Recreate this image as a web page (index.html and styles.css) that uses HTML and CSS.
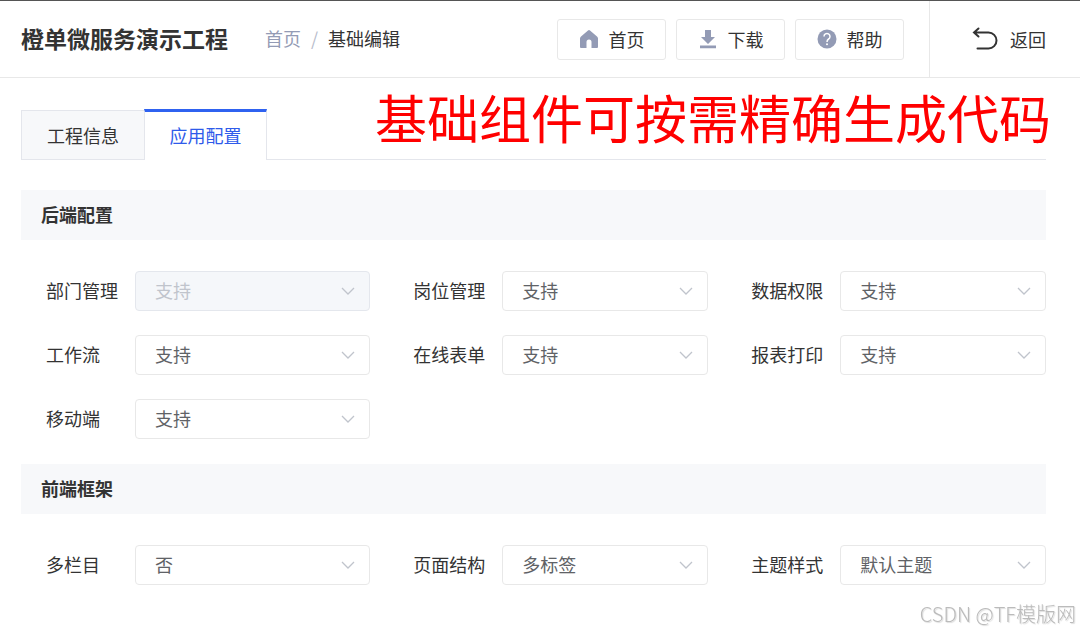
FILE: index.html
```
<!DOCTYPE html>
<html lang="zh-CN">
<head>
  <meta charset="UTF-8">
  <meta name="viewport" content="width=device-width, initial-scale=1.0">
  <title>橙单微服务演示工程</title>
  <link rel="stylesheet" href="styles.css">
</head>
<body>
  <header class="header">
    <h1 class="title">橙单微服务演示工程</h1>
    <nav class="breadcrumb">
      <a href="#">首页</a>
      <span class="separator">/</span>
      <span>基础编辑</span>
    </nav>
    <div class="header-buttons">
      <button type="button" class="btn">
        <svg width="20" height="20" viewBox="0 0 20 20"><path d="M9 1.400Q10 .6 11 1.400L18 7.400Q19 8.300 19 9.500V18Q19 19 18 19H12.500V13a2.500 2.500 0 0 0-5 0v6H2Q1 19 1 18V9.500Q1 8.300 2 7.400Z" fill="#939bb5"/></svg>
        首页
      </button>
      <button type="button" class="btn">
        <svg width="20" height="20" viewBox="0 0 20 20"><path d="M7 1h6v7h4l-7 7-7-7h4zM2 16.500h16v2.700H2z" fill="#939bb5"/></svg>
        下载
      </button>
      <button type="button" class="btn">
        <svg width="20" height="20" viewBox="0 0 20 20"><circle cx="10" cy="10" r="9.500" fill="#939bb5"/><path d="M7 7.500a3 3 0 1 1 4.600 2.500Q10 11 10 13" fill="none" stroke="#fff" stroke-width="1.500"/><circle cx="10" cy="15.200" r="1" fill="#fff"/></svg>
        帮助
      </button>
    </div>
    <button type="button" class="back">
      <svg width="26" height="24" viewBox="0 0 26 24"><path d="M6.500 1.500 2 5.500l4.500 4M2 5.500h14.500a8 8 0 0 1 0 16H5.500" fill="none" stroke="#333" stroke-width="2" stroke-linecap="round"/></svg>
      返回
    </button>
  </header>

  <main class="main">
    <div class="tabs">
      <button type="button" class="tab">工程信息</button>
      <button type="button" class="tab active">应用配置</button>
      <p class="slogan">基础组件可按需精确生成代码</p>
    </div>

    <form>
      <!-- 后端配置 -->
      <h2 class="section-title">后端配置</h2>
      <div class="fields">
        <div class="field">
          <label for="dept">部门管理</label>
          <select id="dept" disabled><option>支持</option></select>
        </div>
        <div class="field">
          <label for="post">岗位管理</label>
          <select id="post"><option>支持</option><option>不支持</option></select>
        </div>
        <div class="field">
          <label for="dataPerm">数据权限</label>
          <select id="dataPerm"><option>支持</option><option>不支持</option></select>
        </div>
        <div class="field">
          <label for="workflow">工作流</label>
          <select id="workflow"><option>支持</option><option>不支持</option></select>
        </div>
        <div class="field">
          <label for="onlineForm">在线表单</label>
          <select id="onlineForm"><option>支持</option><option>不支持</option></select>
        </div>
        <div class="field">
          <label for="report">报表打印</label>
          <select id="report"><option>支持</option><option>不支持</option></select>
        </div>
        <div class="field">
          <label for="mobile">移动端</label>
          <select id="mobile"><option>支持</option><option>不支持</option></select>
        </div>
      </div>

      <!-- 前端框架 -->
      <h2 class="section-title">前端框架</h2>
      <div class="fields">
        <div class="field">
          <label for="multiColumn">多栏目</label>
          <select id="multiColumn"><option>否</option><option>是</option></select>
        </div>
        <div class="field">
          <label for="pageLayout">页面结构</label>
          <select id="pageLayout"><option>多标签</option><option>单页面</option></select>
        </div>
        <div class="field">
          <label for="theme">主题样式</label>
          <select id="theme"><option>默认主题</option></select>
        </div>
      </div>
    </form>
  </main>

  <div class="watermark">CSDN @TF模版网</div>
</body>
</html>
```
FILE: styles.css
```
* {
  margin: 0;
  padding: 0;
  box-sizing: border-box;
}

body {
  font-family: "Noto Sans CJK SC", sans-serif;
  font-size: 18px;
  line-height: 24px;
  color: #333;
  background-color: #fff;
}

button,
select {
  font: inherit;
  color: inherit;
}

button {
  display: flex;
  align-items: center;
  background: none;
  border: none;
  cursor: pointer;
}

/* header */
.header {
  display: flex;
  align-items: center;
  height: 78px;
  padding-left: 21px;
  border-top: 1px solid #555;
  border-bottom: 1px solid #e8e8e8;
}

.title {
  padding-bottom: 2px;
  font-size: 23px;
}

.breadcrumb {
  display: flex;
  gap: 10px;
  margin-left: 37px;
  padding-bottom: 2px;
}

.breadcrumb a {
  color: #939bb5;
  text-decoration: none;
}

.separator {
  color: #b8bdcc;
}

.header-buttons {
  display: flex;
  gap: 10px;
  margin-left: auto;
  margin-right: 25px;
}

.btn {
  gap: 10px;
  width: 109px;
  height: 41px;
  justify-content: center;
  border: 1px solid #e8e8e8;
  border-radius: 3px;
}

.back {
  height: 100%;
  gap: 12px;
  padding: 0 34px 0 42px;
  border-left: 1px solid #e8e8e8;
}

/* tabs */
.main {
  padding: 31px 34px 0 21px;
}

.tabs {
  display: flex;
  height: 51px;
  margin-bottom: 30px;
  border-bottom: 1px solid #e4e6ec;
}

.tab {
  width: 123px;
  justify-content: center;
  margin-top: 1px;
  background-color: #f7f8fa;
  border: 1px solid #e4e6ec;
  border-right: none;
  border-bottom: none;
}

.tab.active {
  margin-top: 0;
  margin-bottom: -1px;
  padding-bottom: 2px;
  color: #2f5bea;
  background-color: #fff;
  border-top: 3px solid #2f62f0;
  border-right: 1px solid #e4e6ec;
}

.slogan {
  margin-left: auto;
  margin-right: -5px;
  font-size: 52px;
  line-height: 16px;
  white-space: nowrap;
  color: #f00;
}

/* form */
.section-title {
  padding: 12px 20px 14px;
  font-size: 18px;
  background-color: #f7f8fa;
}

.fields {
  display: grid;
  grid-template-columns: 11fr 10fr 10fr;
  gap: 24px 43px;
  padding: 31px 0 25px 25px;
}

.field {
  display: flex;
  align-items: center;
}

.field label {
  flex: none;
  width: 89px;
  padding-bottom: 2px;
}

.field select {
  flex: 1;
  min-width: 0;
  height: 40px;
  padding: 0 36px 2px 19px;
  color: #606266;
  border: 1px solid #e8e8e8;
  border-radius: 4px;
  appearance: none;
  background: #fff url("data:image/svg+xml,%3Csvg xmlns='http://www.w3.org/2000/svg' width='14' height='8'%3E%3Cpath d='M1 1l6 6 6-6' fill='none' stroke='%23c0c4cc' stroke-width='1.300'/%3E%3C/svg%3E") no-repeat right 14px center;
}

.field select:disabled {
  color: #c0c4cc;
  background-color: #f5f7fa;
  border-color: #e4e7ed;
  opacity: 1;
}

.watermark {
  position: fixed;
  right: 4px;
  bottom: 5px;
  font-size: 20px;
  font-weight: 300;
  color: #bbb;
  text-shadow: 1px 1px 1px #ddd;
}
```
